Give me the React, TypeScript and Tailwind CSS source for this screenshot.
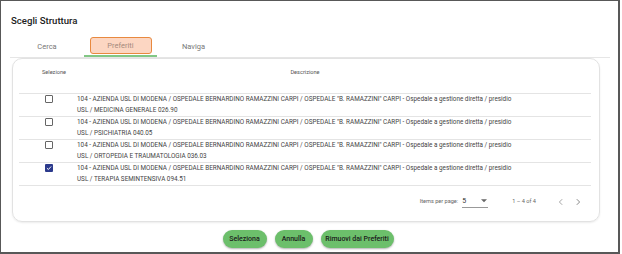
import React from "react";

const rows = [
  { sub: "MEDICINA GENERALE 026.90", checked: false },
  { sub: "PSICHIATRIA 040.05", checked: false },
  { sub: "ORTOPEDIA E TRAUMATOLOGIA 036.03", checked: false },
  { sub: "TERAPIA SEMINTENSIVA 094.51", checked: true },
];

function Checkbox({ checked }: { checked: boolean }) {
  if (checked) {
    return (
      <div className="w-[8px] h-[8px] bg-[#2b3a8c] rounded-[1px] flex items-center justify-center">
        <svg width="6" height="6" viewBox="0 0 10 10">
          <path d="M1.5 5.2 L4 7.5 L8.5 2.5" fill="none" stroke="#fff" strokeWidth="1.6" />
        </svg>
      </div>
    );
  }
  return <div className="w-[8px] h-[8px] border border-[#666] rounded-[1px] bg-white" />;
}

export default function App() {
  return (
    <div
      className="w-[620px] h-[254px] bg-white border-l border-t border-r-2 border-b-2 border-[#585858] flex flex-col"
      style={{ fontFamily: "Roboto, 'Liberation Sans', sans-serif" }}
    >
      <div className="pl-[10px] pt-[13px] h-[36px] text-[9.6px] font-medium text-[#222] leading-[14px]">
        Scegli Struttura
      </div>
      <div className="ml-[9px] mr-[8px] border-b border-[#e6e6e6] flex h-[21px]">
        <div className="w-[74px] flex justify-center pt-[4px] text-[7.5px] text-[#777]">Cerca</div>
        <div className="w-[73px] flex flex-col items-center relative">
          <div className="mt-[0px] w-[62px] h-[17px] border border-[#e8893f] bg-[#fcd6c2] rounded-[3px] flex items-center justify-center text-[7.5px] text-[#a58a7c]">
            Preferiti
          </div>
          <div className="absolute left-0 right-0 bottom-0 h-[2px] bg-[#82c785]" />
        </div>
        <div className="w-[73px] flex justify-center pt-[4px] text-[7.5px] text-[#777]">Naviga</div>
      </div>
      <div className="ml-[11px] w-[588px] h-[164px] border border-[#e2e2e2] rounded-[10px] shadow-[0_1px_2px_rgba(0,0,0,0.08)] px-[6px] flex flex-col">
        <div className="h-[34px] flex text-[5.6px] text-[#555] pt-[9px]">
          <div className="w-[50px] pl-[23px]">Selezione</div>
          <div className="flex-1 text-center pr-[52px]">Descrizione</div>
        </div>
        <div className="border-t border-[#e4e4e4] mr-[2px]">
          {rows.map((r, i) => (
            <div key={i} className="flex border-b border-[#e4e4e4] h-[23px]">
              <div className="w-[58px] flex justify-center pt-[1px] pl-[2px]">
                <Checkbox checked={r.checked} />
              </div>
              <div className="text-[6.35px] leading-[11.5px] text-[#444] -mt-[0.5px]">
                <div>
                  104 - AZIENDA USL DI MODENA / OSPEDALE BERNARDINO RAMAZZINI CARPI / OSPEDALE "B. RAMAZZINI" CARPI - Ospedale a gestione diretta / presidio
                </div>
                <div>USL / {r.sub}</div>
              </div>
            </div>
          ))}
        </div>
        <div className="flex items-center justify-end h-[31px] text-[5.6px] text-[#666] pr-[11px]">
          <span>Items per page:</span>
          <div className="ml-[4px] w-[26px] h-[12px] border-b border-[#999] flex items-center justify-between text-[#333] text-[7px]">
            <span>5</span>
            <svg width="6" height="4" viewBox="0 0 10 6" className="mr-[1px]">
              <path d="M0 0 L10 0 L5 5 Z" fill="#666" />
            </svg>
          </div>
          <span className="ml-[24px]">1 – 4 of 4</span>
          <svg width="8" height="8" viewBox="0 0 10 10" className="ml-[21px]">
            <path d="M6.5 1.5 L3 5 L6.5 8.5" fill="none" stroke="#999" strokeWidth="1.1" />
          </svg>
          <svg width="8" height="8" viewBox="0 0 10 10" className="ml-[9px]">
            <path d="M3.5 1.5 L7 5 L3.5 8.5" fill="none" stroke="#777" strokeWidth="1.1" />
          </svg>
        </div>
      </div>
      <div className="flex justify-center gap-[8px] mt-[8px] pr-[3px]">
        <button className="w-[44px] h-[18px] rounded-full bg-[#6cbf6b] shadow-[0_1px_2px_rgba(0,0,0,0.3)] text-[7px] font-medium text-[#1b1b1b]">
          Seleziona
        </button>
        <button className="w-[38px] h-[18px] rounded-full bg-[#6cbf6b] shadow-[0_1px_2px_rgba(0,0,0,0.3)] text-[7px] font-medium text-[#1b1b1b]">
          Annulla
        </button>
        <button className="w-[73px] h-[18px] rounded-full bg-[#6cbf6b] shadow-[0_1px_2px_rgba(0,0,0,0.3)] text-[7px] font-medium text-[#1b1b1b]">
          Rimuovi dai Preferiti
        </button>
      </div>
    </div>
  );
}
